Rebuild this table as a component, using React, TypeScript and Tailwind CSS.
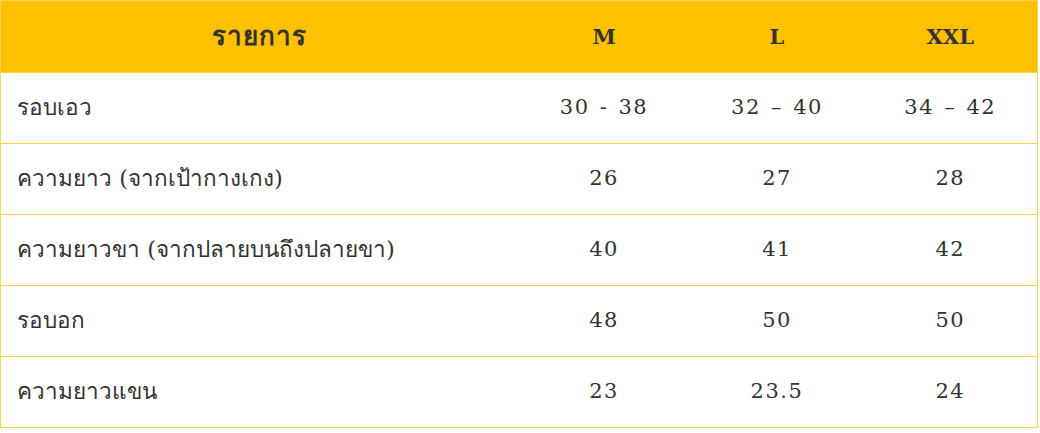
import React from "react";

const rows: [string, string, string, string][] = [
  ["รอบเอว", "30 - 38", "32 – 40", "34 – 42"],
  ["ความยาว (จากเป้ากางเกง)", "26", "27", "28"],
  ["ความยาวขา (จากปลายบนถึงปลายขา)", "40", "41", "42"],
  ["รอบอก", "48", "50", "50"],
  ["ความยาวแขน", "23", "23.5", "24"],
];

export default function App() {
  return (
    <div className="bg-white w-[1040px] h-[433px]" style={{ fontFamily: '"DejaVu Serif", serif' }}>
      <table className="w-[1038px] border-collapse table-fixed text-[#333333] border border-[#ffd24d]">
        <colgroup>
          <col className="w-[517px]" />
          <col className="w-[173px]" />
          <col className="w-[173px]" />
          <col />
        </colgroup>
        <thead>
          <tr className="bg-[#ffc000] h-[72px]">
            <th className="font-bold text-center text-[26px] tracking-[1px]">รายการ</th>
            <th className="font-bold text-center text-[21px]">M</th>
            <th className="font-bold text-center text-[21px]">L</th>
            <th className="font-bold text-center text-[21px]">XXL</th>
          </tr>
        </thead>
        <tbody>
          {rows.map((r, i) => (
            <tr key={i} className="h-[71px] border-t border-[#ffd24d]">
              <td className="px-4 text-left text-[22.5px]">{r[0]}</td>
              <td className="text-center text-[21px] tracking-[1.5px] [word-spacing:2px]">{r[1]}</td>
              <td className="text-center text-[21px] tracking-[1.5px] [word-spacing:2px]">{r[2]}</td>
              <td className="text-center text-[21px] tracking-[1.5px] [word-spacing:2px]">{r[3]}</td>
            </tr>
          ))}
        </tbody>
      </table>
    </div>
  );
}
